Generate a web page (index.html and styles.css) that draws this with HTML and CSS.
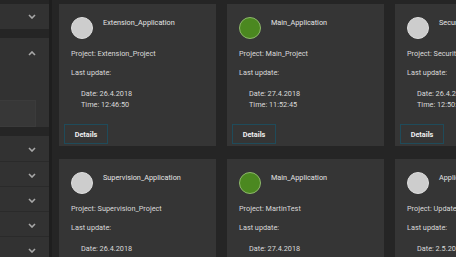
FILE: index.html
```html
<!DOCTYPE html>
<html lang="en">

<head>
    <meta charset="UTF-8">
    <meta name="viewport" content="width=device-width, initial-scale=1.0">
    <title>applications</title>
    <link rel="stylesheet" href="styles.css">
</head>

<body>
    <div class="page">
        <div class="sidebar">
            <div class="panel">
                <div class="row"><svg class="chev" viewBox="0 0 8 5"><polyline points="1,1 4,4 7,1"/></svg></div>
            </div>
            <div class="panel open">
                <div class="row head"><svg class="chev" viewBox="0 0 8 5"><polyline points="1,4 4,1 7,4"/></svg></div>
                <div class="inset"></div>
            </div>
            <div class="panel list">
                <div class="row"><svg class="chev" viewBox="0 0 8 5"><polyline points="1,1 4,4 7,1"/></svg></div>
                <div class="row"><svg class="chev" viewBox="0 0 8 5"><polyline points="1,1 4,4 7,1"/></svg></div>
                <div class="row"><svg class="chev" viewBox="0 0 8 5"><polyline points="1,1 4,4 7,1"/></svg></div>
                <div class="row"><svg class="chev" viewBox="0 0 8 5"><polyline points="1,1 4,4 7,1"/></svg></div>
                <div class="row"><svg class="chev" viewBox="0 0 8 5"><polyline points="1,1 4,4 7,1"/></svg></div>
            </div>
        </div>

        <div class="cards">
            <div class="card">
                <div class="head"><span class="dot"></span><span class="title">Extension_Application</span></div>
                <div class="line">Project: Extension_Project</div>
                <div class="line">Last update:</div>
                <div class="when">Date: 26.4.2018<br>Time: 12:46:50</div>
                <button class="details">Details</button>
            </div>
            <div class="card">
                <div class="head"><span class="dot green"></span><span class="title">Main_Application</span></div>
                <div class="line">Project: Main_Project</div>
                <div class="line">Last update:</div>
                <div class="when">Date: 27.4.2018<br>Time: 11:52:45</div>
                <button class="details">Details</button>
            </div>
            <div class="card">
                <div class="head"><span class="dot"></span><span class="title">Security_Application</span></div>
                <div class="line">Project: Security_Project</div>
                <div class="line">Last update:</div>
                <div class="when">Date: 26.4.2018<br>Time: 12:50:18</div>
                <button class="details">Details</button>
            </div>

            <div class="card">
                <div class="head"><span class="dot"></span><span class="title">Supervision_Application</span></div>
                <div class="line">Project: Supervision_Project</div>
                <div class="line">Last update:</div>
                <div class="when">Date: 26.4.2018<br>Time: 12:53:07</div>
                <button class="details">Details</button>
            </div>
            <div class="card">
                <div class="head"><span class="dot green"></span><span class="title">Main_Application</span></div>
                <div class="line">Project: MartinTest</div>
                <div class="line">Last update:</div>
                <div class="when">Date: 27.4.2018<br>Time: 10:13:22</div>
                <button class="details">Details</button>
            </div>
            <div class="card">
                <div class="head"><span class="dot"></span><span class="title">Application</span></div>
                <div class="line">Project: Update_Project</div>
                <div class="line">Last update:</div>
                <div class="when">Date: 2.5.2018<br>Time: 09:37:41</div>
                <button class="details">Details</button>
            </div>
        </div>
    </div>
</body>

</html>
```

FILE: styles.css
```css
body {
    margin: 0;
    background: #252525;
    font-family: Roboto, "Liberation Sans", sans-serif;
    overflow: hidden;
}

.page {
    display: flex;
    width: 456px;
    height: 257px;
    overflow: hidden;
}

/* left accordion */
.sidebar {
    width: 49px;
    flex-shrink: 0;
    padding-top: 4px;
    border-right: 3px solid #1e1e1e;
    display: flex;
    flex-direction: column;
    gap: 9px;
}

.panel {
    background: #323232;
}

.panel.open {
    height: 97px;
}

.row {
    height: 25px;
    display: flex;
    align-items: center;
    justify-content: flex-end;
    padding-right: 13px;
    box-sizing: border-box;
}

.list .row {
    padding-top: 2px;
}

.list .row + .row {
    border-top: 1px solid #2a2a2a;
}

.head.row {
    height: 31px;
}

.chev {
    width: 8px;
    height: 5px;
    fill: none;
    stroke: #a8a8a8;
    stroke-width: 1.6;
}

.inset {
    margin-top: 31px;
    width: 36px;
    height: 27px;
    background: #373737;
    border: 1px solid #3b3b3b;
    border-left: none;
    box-sizing: border-box;
}

/* application cards */
.cards {
    display: grid;
    grid-template-columns: repeat(3, 157px);
    column-gap: 11px;
    row-gap: 13px;
    padding: 4px 0 0 7px;
    align-content: start;
}

.card {
    background: #353535;
    height: 142px;
    padding: 13px 0 0 12px;
    box-sizing: border-box;
    color: #dadada;
    font-size: 7.3px;
    line-height: 10px;
}

.card .head {
    display: flex;
    align-items: flex-start;
    gap: 10px;
    height: 22px;
}

.dot {
    width: 22px;
    height: 22px;
    border-radius: 50%;
    background: #cdcdcd;
    border: 1px solid #dedede;
    box-sizing: border-box;
    flex-shrink: 0;
}

.dot.green {
    background: #4b8820;
    border-color: #8db86a;
}

.title {
    margin-top: 1px;
    color: #e4e4e4;
    white-space: nowrap;
}

.line {
    margin-top: 10px;
    white-space: nowrap;
}

.line + .line {
    margin-top: 9px;
}

.when {
    margin: 10px 0 0 10px;
    line-height: 11px;
    white-space: nowrap;
}

.details {
    display: block;
    margin: 14px 0 0 -7px;
    width: 44px;
    height: 20px;
    padding: 0;
    background: transparent;
    border: 1px solid #1f4b5a;
    color: #f0f0f0;
    font-family: inherit;
    font-size: 7.3px;
    font-weight: bold;
}
```
